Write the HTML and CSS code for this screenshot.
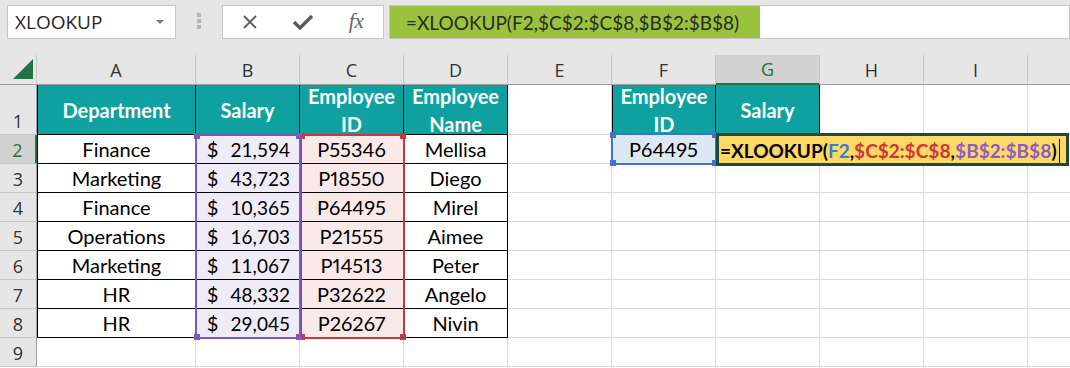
FILE: index.html
```html
<!DOCTYPE html>
<html lang="en">

<head>
    <meta charset="UTF-8">
    <title>XLOOKUP</title>
    <link rel="stylesheet" href="styles.css">
</head>

<body>
    <div class="toolbar">
        <div class="namebox">
            <span>XLOOKUP</span>
            <span class="drop"></span>
        </div>
        <div class="grip"><i></i><i></i><i></i></div>
        <div class="fnbox">
            <span class="fn-icon">
                <svg width="16" height="14" viewBox="0 0 16 14"><path d="M2 1 L14 13 M14 1 L2 13" stroke="#5b5b5b" stroke-width="1.8" fill="none"/></svg>
            </span>
            <span class="fn-icon">
                <svg width="22" height="16" viewBox="0 0 22 16"><path d="M2 8 L8 14 L20 2" stroke="#5b5b5b" stroke-width="3.4" fill="none"/></svg>
            </span>
            <span class="fn-icon fx">fx</span>
        </div>
        <div class="formula">
            <div class="formula-text">=XLOOKUP(F2,$C$2:$C$8,$B$2:$B$8)</div>
        </div>
    </div>

    <div class="sheet">
        <!-- column headers -->
        <div class="corner"><span class="tri"></span></div>
        <div class="ch">A</div>
        <div class="ch">B</div>
        <div class="ch">C</div>
        <div class="ch">D</div>
        <div class="ch">E</div>
        <div class="ch">F</div>
        <div class="ch active">G</div>
        <div class="ch">H</div>
        <div class="ch">I</div>
        <div class="ch last"></div>

        <!-- row 1 -->
        <div class="rh">1</div>
        <div class="c t th first">Department</div>
        <div class="c t th">Salary</div>
        <div class="c t th">Employee<br>ID</div>
        <div class="c t th">Employee<br>Name</div>
        <div class="c"></div>
        <div class="c t th first">Employee<br>ID</div>
        <div class="c t th">Salary</div>
        <div class="c"></div>
        <div class="c"></div>
        <div class="c last"></div>

        <!-- row 2 -->
        <div class="rh active">2</div>
        <div class="c t first">Finance</div>
        <div class="c t money"><span>$</span><span class="num">21,594</span></div>
        <div class="c t id">P55346</div>
        <div class="c t">Mellisa</div>
        <div class="c"></div>
        <div class="c lookup">P64495</div>
        <div class="c"></div>
        <div class="c"></div>
        <div class="c"></div>
        <div class="c last"></div>

        <!-- row 3 -->
        <div class="rh">3</div>
        <div class="c t first">Marketing</div>
        <div class="c t money"><span>$</span><span class="num">43,723</span></div>
        <div class="c t id">P18550</div>
        <div class="c t">Diego</div>
        <div class="c"></div>
        <div class="c"></div>
        <div class="c"></div>
        <div class="c"></div>
        <div class="c"></div>
        <div class="c last"></div>

        <!-- row 4 -->
        <div class="rh">4</div>
        <div class="c t first">Finance</div>
        <div class="c t money"><span>$</span><span class="num">10,365</span></div>
        <div class="c t id">P64495</div>
        <div class="c t">Mirel</div>
        <div class="c"></div>
        <div class="c"></div>
        <div class="c"></div>
        <div class="c"></div>
        <div class="c"></div>
        <div class="c last"></div>

        <!-- row 5 -->
        <div class="rh">5</div>
        <div class="c t first">Operations</div>
        <div class="c t money"><span>$</span><span class="num">16,703</span></div>
        <div class="c t id">P21555</div>
        <div class="c t">Aimee</div>
        <div class="c"></div>
        <div class="c"></div>
        <div class="c"></div>
        <div class="c"></div>
        <div class="c"></div>
        <div class="c last"></div>

        <!-- row 6 -->
        <div class="rh">6</div>
        <div class="c t first">Marketing</div>
        <div class="c t money"><span>$</span><span class="num">11,067</span></div>
        <div class="c t id">P14513</div>
        <div class="c t">Peter</div>
        <div class="c"></div>
        <div class="c"></div>
        <div class="c"></div>
        <div class="c"></div>
        <div class="c"></div>
        <div class="c last"></div>

        <!-- row 7 -->
        <div class="rh">7</div>
        <div class="c t first">HR</div>
        <div class="c t money"><span>$</span><span class="num">48,332</span></div>
        <div class="c t id">P32622</div>
        <div class="c t">Angelo</div>
        <div class="c"></div>
        <div class="c"></div>
        <div class="c"></div>
        <div class="c"></div>
        <div class="c"></div>
        <div class="c last"></div>

        <!-- row 8 -->
        <div class="rh">8</div>
        <div class="c t first">HR</div>
        <div class="c t money"><span>$</span><span class="num">29,045</span></div>
        <div class="c t id">P26267</div>
        <div class="c t">Nivin</div>
        <div class="c"></div>
        <div class="c"></div>
        <div class="c"></div>
        <div class="c"></div>
        <div class="c"></div>
        <div class="c last"></div>

        <!-- row 9 -->
        <div class="rh">9</div>
        <div class="c"></div>
        <div class="c"></div>
        <div class="c"></div>
        <div class="c"></div>
        <div class="c"></div>
        <div class="c"></div>
        <div class="c"></div>
        <div class="c"></div>
        <div class="c"></div>
        <div class="c last"></div>

        <!-- range highlights drawn over the cells -->
        <div class="sel sel-c"><i class="tl"></i><i class="tr"></i><i class="bl"></i><i class="br"></i></div>
        <div class="sel sel-b"><i class="tl"></i><i class="tr"></i><i class="bl"></i><i class="br"></i></div>
        <div class="sel sel-f"><i class="tl"></i><i class="tr"></i><i class="bl"></i><i class="br"></i></div>
        <div class="edit">
            <span>=XLOOKUP(</span><span class="ref-f">F2</span><span>,</span><span class="ref-c">$C$2:$C$8</span><span>,</span><span class="ref-b">$B$2:$B$8</span><span>)</span><span class="caret"></span>
        </div>
    </div>
</body>

</html>
```

FILE: styles.css
```css
body {
    margin: 0px;
    width: 1070px;
    height: 368px;
    overflow: hidden;
    background: #fff;
    font-family: Lato, 'Liberation Sans', sans-serif;
}

/* formula bar */

.toolbar {
    height: 55px;
    box-sizing: border-box;
    padding: 5px 0px 0px 7px;
    display: flex;
    align-items: flex-start;
    background: #e6e6e6;
}

.namebox {
    width: 169px;
    height: 34px;
    box-sizing: border-box;
    padding: 0px 11px 0px 7px;
    display: flex;
    align-items: center;
    justify-content: space-between;
    background: #fff;
    border: 1px solid #c6c6c6;
    font-family: 'Open Sans', sans-serif;
    font-size: 19px;
    color: #262626;
}

.namebox .drop {
    width: 0px;
    height: 0px;
    border-left: 4px solid transparent;
    border-right: 4px solid transparent;
    border-top: 4px solid #7a7a7a;
}

.grip {
    width: 46px;
    padding-top: 8px;
    display: flex;
    flex-direction: column;
    align-items: center;
    gap: 2px;
}

.grip i {
    width: 4px;
    height: 4px;
    background: #b4b4b4;
}

.fnbox {
    width: 162px;
    height: 34px;
    box-sizing: border-box;
    display: flex;
    background: #fff;
    border: 1px solid #c6c6c6;
}

.fn-icon {
    width: 54px;
    display: flex;
    align-items: center;
    justify-content: center;
}

.fn-icon.fx {
    font-family: 'Liberation Serif', serif;
    font-style: italic;
    font-size: 21px;
    color: #666;
    padding-bottom: 2px;
}

.formula {
    flex: 1;
    margin-left: 5px;
    height: 34px;
    box-sizing: border-box;
    background: #fff;
    border: 1px solid #c6c6c6;
}

.formula-text {
    width: 370px;
    height: 100%;
    box-sizing: border-box;
    padding-left: 16px;
    display: flex;
    align-items: center;
    background: #9bc23c;
    font-size: 19px;
    color: #2a2a2a;
}

/* sheet grid */

.sheet {
    position: relative;
    display: grid;
    grid-template-columns: 37px 159px repeat(8, 104px) 1fr;
    grid-template-rows: 30px 50px repeat(8, 29px);
}

.sheet>div {
    box-sizing: border-box;
    min-width: 0px;
}

.corner,
.ch {
    display: flex;
    align-items: center;
    justify-content: center;
    background: #e6e6e6;
    border-right: 1px solid #c8c8c8;
    border-bottom: 1px solid #9f9f9f;
    font-family: 'Open Sans', sans-serif;
    font-size: 18px;
    color: #333;
}

.corner {
    justify-content: flex-end;
    align-items: flex-end;
    padding: 0px 3px 5px 0px;
}

.corner .tri {
    width: 20px;
    height: 20px;
    background: #217346;
    clip-path: polygon(100% 0, 100% 100%, 0 100%);
}

.ch.active {
    background: #d2d2d2;
    color: #217346;
    border-bottom: 2px solid #217346;
}

.ch.last {
    border-right: none;
}

.rh {
    display: flex;
    align-items: flex-end;
    justify-content: center;
    padding-bottom: 1px;
    background: #e6e6e6;
    border-right: 1px solid #9f9f9f;
    border-bottom: 1px solid #c8c8c8;
    font-family: 'Open Sans', sans-serif;
    font-size: 18px;
    color: #333;
}

.rh.active {
    background: #d2d2d2;
    color: #217346;
    border-right: 2px solid #217346;
}

.c {
    display: flex;
    align-items: flex-end;
    justify-content: center;
    padding-bottom: 2px;
    border-right: 1px solid #d9d9d9;
    border-bottom: 1px solid #d9d9d9;
    font-size: 20px;
    font-variant-numeric: proportional-nums;
    color: #000;
    white-space: nowrap;
}

.c.last {
    border-right: none;
}

.c.t {
    border-right-color: #000;
    border-bottom-color: #000;
}

.c.first {
    border-left: 1px solid #000;
}

.c.th {
    align-items: center;
    padding-bottom: 0px;
    background: #0fa0a0;
    color: #fff;
    font-weight: 700;
    line-height: 28px;
    text-align: center;
}

.c.money {
    justify-content: space-between;
    padding: 0px 9px 2px 11px;
    background: #efecf8;
}

.c.money .num {
    font-size: 19px;
    font-variant-numeric: tabular-nums;
}

.c.id {
    background: #fae9e9;
}

.c.lookup {
    background: #dde8f6;
}

/* range highlights */

.sel {
    position: absolute;
    pointer-events: none;
    box-sizing: border-box;
}

.sel i {
    position: absolute;
    width: 6px;
    height: 6px;
}

.sel .tl {
    left: -3px;
    top: -3px;
}

.sel .tr {
    right: -3px;
    top: -3px;
}

.sel .bl {
    left: -3px;
    bottom: -3px;
}

.sel .br {
    right: -3px;
    bottom: -3px;
}

.sel-b {
    grid-column: 3 / 4;
    grid-row: 3 / 10;
    inset: -1px -1px -1px -1px;
    border: 2px solid #7f56c4;
}

.sel-b i {
    background: #7f56c4;
}

.sel-c {
    grid-column: 4 / 5;
    grid-row: 3 / 10;
    inset: -1px -1px -1px 0px;
    border: 2px solid #c7393e;
}

.sel-c i {
    background: #c7393e;
}

.sel-f {
    grid-column: 7 / 8;
    grid-row: 3 / 4;
    inset: -2px -1px -1px -1px;
    border: 2px solid #3f74c9;
}

.sel-f i {
    background: #3f74c9;
}

.edit {
    position: absolute;
    grid-column: 8 / 12;
    grid-row: 3 / 4;
    inset: -2px 1px -2px 0px;
    box-sizing: border-box;
    padding: 2px 0px 0px 1px;
    display: flex;
    align-items: center;
    background: #ffd966;
    border: 3px solid #1d4b43;
    font-size: 19px;
    font-weight: 700;
    font-variant-numeric: proportional-nums;
    color: #000;
    white-space: nowrap;
}

.edit .ref-f {
    color: #3b7bd4;
}

.edit .ref-c {
    color: #d1343a;
}

.edit .ref-b {
    color: #8c5cc8;
}

.edit .caret {
    width: 1px;
    height: 24px;
    margin-left: 2px;
    background: #000;
}
```
